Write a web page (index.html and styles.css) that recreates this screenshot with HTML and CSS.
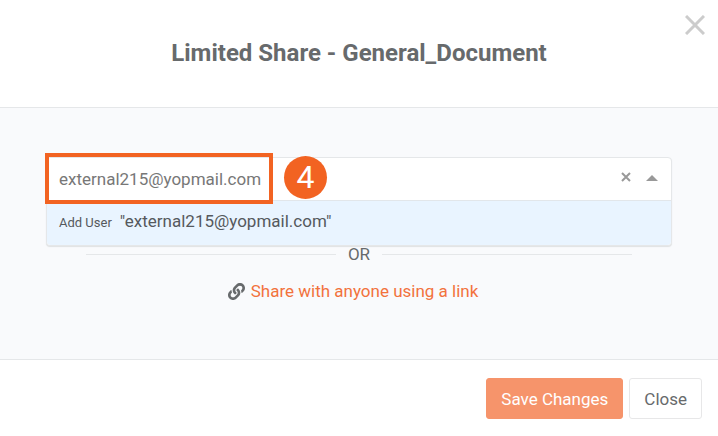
FILE: index.html
```html
<!DOCTYPE html>
<html lang="en">
<head>
<meta charset="utf-8">
<title>Limited Share</title>
<link rel="stylesheet" href="styles.css">
</head>
<body>
<section class="modal" role="dialog" aria-labelledby="dialog-title">
  <header class="modal-header">
    <h1 class="modal-title" id="dialog-title">Limited Share - General_Document</h1>
    <button class="dismiss" type="button" aria-label="Dismiss">
      <svg width="20" height="20" viewBox="0 0 20 20"><path d="M1 1 19 19M19 1 1 19" fill="none" stroke="currentColor" stroke-width="3"/></svg>
    </button>
  </header>
  <main class="modal-body">
    <div class="picker">
      <div class="control">
        <input class="control-input" type="text" value="external215@yopmail.com" aria-label="User email">
        <button class="control-button" type="button" aria-label="Clear">
          <svg width="10" height="14" viewBox="0 0 10 14"><path d="M1 1 9 9M9 1 1 9" fill="none" stroke="currentColor" stroke-width="2"/></svg>
        </button>
        <button class="control-button" type="button" aria-label="Toggle list">
          <svg width="12" height="8" viewBox="0 0 12 8"><path d="M0 6 6 0 12 6Z" fill="currentColor"/></svg>
        </button>
      </div>
      <button class="option" type="button"><span class="option-label">Add User</span>"external215@yopmail.com"</button>
      <div class="marker-frame"></div>
      <div class="marker-step">4</div>
    </div>
    <div class="divider">OR</div>
    <div class="link-row">
      <svg class="link-icon" width="17" height="17" viewBox="0 0 512 512"><path fill="currentColor" d="M326.612 185.391c59.747 59.809 58.927 155.698.36 214.59-.11.12-.24.25-.36.37l-67.2 67.2c-59.27 59.27-155.699 59.262-214.96 0-59.27-59.26-59.27-155.7 0-214.96l37.106-37.106c9.84-9.84 26.786-3.3 27.294 10.606.648 17.722 3.826 35.527 9.69 52.721 1.986 5.822.567 12.262-3.783 16.612l-13.087 13.087c-28.026 28.026-28.905 73.66-1.155 101.96 28.024 28.579 74.086 28.749 102.325.51l67.2-67.19c28.191-28.191 28.073-73.757 0-101.83-3.701-3.694-7.429-6.564-10.341-8.569a16.037 16.037 0 0 1-6.947-12.606c-.396-10.567 3.348-21.456 11.698-29.806l21.054-21.055c5.521-5.521 14.182-6.199 20.584-1.731a152.482 152.482 0 0 1 20.522 17.197zM467.547 44.449c-59.261-59.262-155.69-59.27-214.96 0l-67.2 67.2c-.12.12-.25.25-.36.37-58.566 58.892-59.387 154.781.36 214.59a152.454 152.454 0 0 0 20.521 17.196c6.402 4.468 15.064 3.789 20.584-1.731l21.054-21.055c8.35-8.35 12.094-19.239 11.698-29.806a16.037 16.037 0 0 0-6.947-12.606c-2.912-2.005-6.64-4.875-10.341-8.569-28.073-28.073-28.191-73.639 0-101.83l67.2-67.19c28.239-28.239 74.3-28.069 102.325.51 27.75 28.3 26.872 73.934-1.155 101.96l-13.087 13.087c-4.35 4.35-5.769 10.79-3.783 16.612 5.864 17.194 9.042 34.999 9.69 52.721.509 13.906 17.454 20.446 27.294 10.606l37.106-37.106c59.271-59.259 59.271-155.699.001-214.959z"/></svg>
      <a class="share-link" href="#">Share with anyone using a link</a>
    </div>
  </main>
  <footer class="modal-footer">
    <button class="btn btn-primary" type="button">Save Changes</button>
    <button class="btn" type="button">Close</button>
  </footer>
</section>
</body>
</html>
```
FILE: styles.css
```css
* { box-sizing: border-box; }

body {
  margin: 0;
  background: #fff;
  color: #676a6c;
  font: 17px/24px Roboto, "Liberation Sans", sans-serif;
}

button, input { font: inherit; color: inherit; }
svg { display: block; }

.modal-header {
  position: relative;
  padding: 38px 46px;
  border-bottom: 1px solid #e5e7e9;
}

.modal-title {
  margin: 0;
  font-size: 24px;
  line-height: 31px;
  font-weight: 700;
  text-align: center;
}

.dismiss {
  position: absolute;
  top: 15px;
  right: 13px;
  padding: 0;
  border: 0;
  background: none;
  color: #ccc;
}

.modal-body {
  padding: 49px 46px 56px;
  background: #f9fafc;
  border-bottom: 1px solid #e5e7e9;
}

.picker {
  position: relative;
  border: 1px solid #e5e7e9;
  border-radius: 4px;
  background: #fff;
  box-shadow: 0 1px 1px #dfe1e3;
}

.control {
  display: flex;
  align-items: center;
  height: 43px;
  padding-right: 6px;
  border-bottom: 1px solid #e2e6ea;
}

.control-input {
  flex: 1;
  min-width: 0;
  height: 100%;
  padding: 0 12px;
  border: 0;
  outline: 0;
  background: none;
  color: #777;
}

.control-button {
  display: flex;
  align-items: center;
  justify-content: center;
  width: 26px;
  height: 24px;
  padding: 0;
  border: 0;
  background: none;
  color: #999;
}

.option {
  display: block;
  width: 100%;
  height: 44px;
  padding: 0 12px 2px;
  border: 0;
  border-radius: 0 0 4px 4px;
  background: #e9f4ff;
  color: #55595d;
  text-align: left;
}

.option-label {
  margin-right: 8px;
  font-size: 13px;
}

.marker-frame {
  position: absolute;
  top: -5px;
  left: -2px;
  width: 228px;
  height: 51px;
  border: 4px solid #f26322;
  pointer-events: none;
}

.marker-step {
  position: absolute;
  top: -2px;
  left: 237px;
  width: 43px;
  height: 43px;
  border-radius: 50%;
  background: #f26322;
  color: #fff;
  font-size: 32px;
  line-height: 43px;
  text-align: center;
}

.divider {
  display: flex;
  align-items: center;
  gap: 12px;
  height: 16px;
  padding: 0 40px;
}

.divider::before,
.divider::after {
  content: "";
  flex: 1;
  height: 1px;
  background: #e5e7e9;
}

.link-row {
  display: flex;
  align-items: center;
  justify-content: center;
  gap: 6px;
  margin-top: 17px;
  padding-right: 12px;
}

.share-link {
  color: #f2723c;
  text-decoration: none;
}

.modal-footer {
  display: flex;
  justify-content: flex-end;
  gap: 6px;
  padding: 18px 16px;
}

.btn {
  height: 41px;
  padding: 0 14px;
  border: 1px solid #e7e7e8;
  border-radius: 3px;
  background: #fff;
}

.btn-primary {
  border-color: #f6946b;
  background: #f6946b;
  color: #fff;
}
```
